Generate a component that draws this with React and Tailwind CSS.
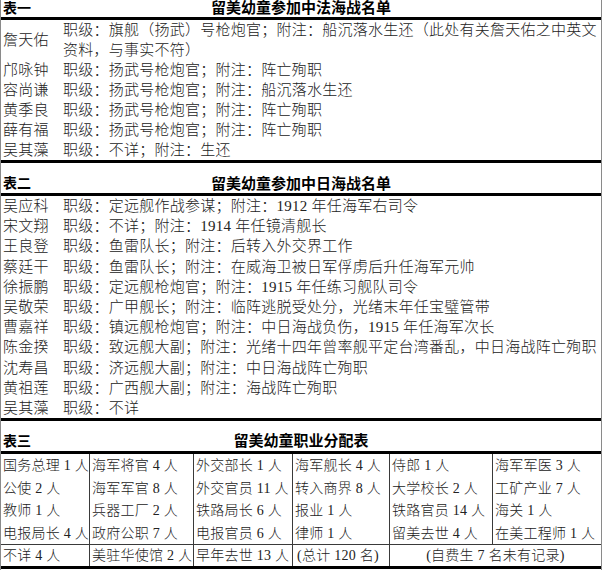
import clsx from 'clsx'

const serif = "font-['Liberation_Serif','Noto_Sans_CJK_SC',serif]"

const sinoFrench = [
  ['詹天佑', <>职级：旗舰（扬武）号枪炮官；附注：船沉落水生还（此处有关詹天佑之中英文<br />资料，与事实不符）</>],
  ['邝咏钟', '职级：扬武号枪炮官；附注：阵亡殉职'],
  ['容尚谦', '职级：扬武号枪炮官；附注：船沉落水生还'],
  ['黄季良', '职级：扬武号枪炮官；附注：阵亡殉职'],
  ['薛有福', '职级：扬武号枪炮官；附注：阵亡殉职'],
  ['吴其藻', '职级：不详；附注：生还'],
]

const sinoJapanese = [
  ['吴应科', '职级：定远舰作战参谋；附注：1912 年任海军右司令'],
  ['宋文翔', '职级：不详；附注：1914 年任镜清舰长'],
  ['王良登', '职级：鱼雷队长；附注：后转入外交界工作'],
  ['蔡廷干', '职级：鱼雷队长；附注：在威海卫被日军俘虏后升任海军元帅'],
  ['徐振鹏', '职级：定远舰枪炮官；附注：1915 年任练习舰队司令'],
  ['吴敬荣', '职级：广甲舰长；附注：临阵逃脱受处分，光绪末年任宝璧管带'],
  ['曹嘉祥', '职级：镇远舰枪炮官；附注：中日海战负伤，1915 年任海军次长'],
  ['陈金揆', '职级：致远舰大副；附注：光绪十四年曾率舰平定台湾番乱，中日海战阵亡殉职'],
  ['沈寿昌', '职级：济远舰大副；附注：中日海战阵亡殉职'],
  ['黄祖莲', '职级：广西舰大副；附注：海战阵亡殉职'],
  ['吴其藻', '职级：不详'],
]

const careers = [
  ['国务总理 1 人', '海军将官 4 人', '外交部长 1 人', '海军舰长 4 人', '侍郎 1 人', '海军军医 3 人'],
  ['公使 2 人', '海军军官 8 人', '外交官员 11 人', '转入商界 8 人', '大学校长 2 人', '工矿产业 7 人'],
  ['教师 1 人', '兵器工厂 2 人', '铁路局长 6 人', '报业 1 人', '铁路官员 14 人', '海关 1 人'],
  ['电报局长 4 人', '政府公职 7 人', '电报官员 6 人', '律师 1 人', '留美去世 4 人', '在美工程师 1 人'],
]

const lastRow = ['不详 4 人', '美驻华使馆 2 人', '早年去世 13 人', '(总计 120 名)']

function Heading({ label, title, className }) {
  return (
    <div className={clsx('grid grid-cols-[1fr_auto_1fr] items-center border-black font-bold text-black', className)}>
      <span className="pl-[2px] text-[14px]">{label}</span>
      <span className="text-[15px]">{title}</span>
      <span />
    </div>
  )
}

function NameList({ rows, className }) {
  return (
    <div className={clsx('border-b-[3px] border-black text-[15px] tracking-[0.25px] font-light text-[#222]', className)}>
      {rows.map(([name, text]) => (
        <div key={name + text} className="flex items-center">
          <div className="w-[62px] shrink-0 pl-[2px]">{name}</div>
          <div className="whitespace-nowrap">{text}</div>
        </div>
      ))}
    </div>
  )
}

export default function App() {
  return (
    <div className={clsx('w-[602px] h-[570px] bg-white border-x border-[#8a8a8a]', serif)}>
      <Heading label="表一" title="留美幼童参加中法海战名单" className="h-[20px] border-b-[3px] leading-[17px]" />
      <NameList rows={sinoFrench} className="leading-[20px]" />

      <Heading label="表二" title="留美幼童参加中日海战名单" className="mt-[12px] h-[21px] border-b-[3px] leading-[18px]" />
      <NameList rows={sinoJapanese} className="leading-[20.2px]" />

      <Heading label="表三" title="留美幼童职业分配表" className="mt-[11px] h-[22px] border-b-[3px] leading-[19px]" />
      <div className="text-[14px] tracking-[0.25px] font-light text-[#222] whitespace-nowrap">
        <div className="grid grid-cols-[88px_104px_99px_97px_103px_1fr] leading-[22.5px]">
          {careers.map((row, r) =>
            row.map((cell, c) => (
              <div
                key={`${r}-${c}`}
                className={clsx('h-[22.5px] pl-[2px] pt-[1px]', c > 0 && 'border-l border-[#3a3a3a]')}
              >
                {cell}
              </div>
            ))
          )}
        </div>
        <div className="grid grid-cols-[88px_104px_99px_97px_1fr] h-[25px] border-t border-b-[3px] border-t-[#3a3a3a] border-b-black leading-[21px]">
          {lastRow.map((cell, c) => (
            <div key={cell} className={clsx('pl-[2px]', c > 0 && 'border-l border-[#3a3a3a]', c === 3 && 'pl-[4px]')}>
              {cell}
            </div>
          ))}
          <div className="border-l border-[#3a3a3a] text-center">(自费生 7 名未有记录)</div>
        </div>
      </div>
    </div>
  )
}
